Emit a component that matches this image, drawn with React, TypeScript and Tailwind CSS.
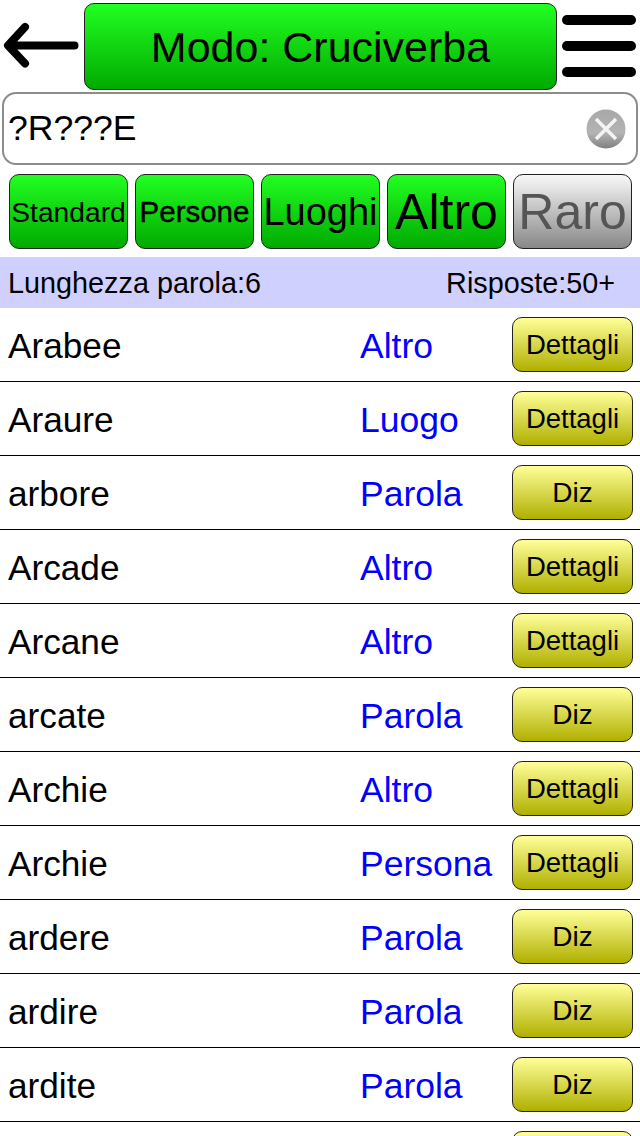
// App.tsx
const FONT = "font-['Liberation_Sans',Arial,sans-serif]";

const GREEN = "bg-linear-to-b/srgb from-[#22ff22] to-[#00aa00] border border-[#222] rounded-[10px]";
const YELLOW = "bg-linear-to-b/srgb from-[#ffff99] to-[#b0b000] border border-[#222] rounded-[10px]";

const FILTERS = [
  { label: "Standard", size: "text-[28.2px]" },
  { label: "Persone", size: "text-[29.5px] [-webkit-text-stroke:0.4px_#000]" },
  { label: "Luoghi", size: "text-[38px]" },
  { label: "Altro", size: "text-[50px]" },
];

const ROWS = [
  { word: "Arabee", kind: "Altro", action: "Dettagli" },
  { word: "Araure", kind: "Luogo", action: "Dettagli" },
  { word: "arbore", kind: "Parola", action: "Diz" },
  { word: "Arcade", kind: "Altro", action: "Dettagli" },
  { word: "Arcane", kind: "Altro", action: "Dettagli" },
  { word: "arcate", kind: "Parola", action: "Diz" },
  { word: "Archie", kind: "Altro", action: "Dettagli" },
  { word: "Archie", kind: "Persona", action: "Dettagli" },
  { word: "ardere", kind: "Parola", action: "Diz" },
  { word: "ardire", kind: "Parola", action: "Diz" },
  { word: "ardite", kind: "Parola", action: "Diz" },
];

function BackArrow() {
  return (
    <svg width="84" height="90" viewBox="0 0 84 90" className="shrink-0">
      <path
        d="M74.5 45.5H9M25 27L8 45.5L25 63.5"
        fill="none"
        stroke="#000"
        strokeWidth="8"
        strokeLinecap="round"
        strokeLinejoin="round"
      />
    </svg>
  );
}

function MenuIcon() {
  return (
    <div className="flex w-[83px] shrink-0 flex-col gap-[16px] pl-[5px] pr-[4px] pt-[12px]">
      <span className="block h-[10px] rounded-full bg-black" />
      <span className="block h-[10px] rounded-full bg-black" />
      <span className="block h-[10px] rounded-full bg-black" />
    </div>
  );
}

function ClearIcon() {
  return (
    <svg width="40" height="40" viewBox="0 0 40 40" className="shrink-0">
      <defs>
        <linearGradient id="clearFill" x1="0" y1="0" x2="0" y2="1">
          <stop offset="0" stopColor="#a8a8a8" />
          <stop offset="0.6" stopColor="#b4b4b4" />
          <stop offset="1" stopColor="#808080" />
        </linearGradient>
      </defs>
      <circle cx="20" cy="20" r="19.5" fill="url(#clearFill)" />
      <path d="M10 10L30 30M30 10L10 30" stroke="#f4f4f4" strokeWidth="3.5" />
    </svg>
  );
}

export default function App() {
  return (
    <div className={`${FONT} h-[1136px] w-[640px] overflow-hidden bg-white text-black`}>
      {/* Testata */}
      <div className="flex h-[92px] pt-[3px]">
        <div className="-mt-[3px]">
          <BackArrow />
        </div>
        <div className={`${GREEN} flex h-[87px] w-[473px] shrink-0 items-center justify-center pt-[1px] text-[43px]`}>
          Modo: Cruciverba
        </div>
        <MenuIcon />
      </div>

      {/* Ricerca */}
      <div className="mx-[2px] flex h-[73px] items-center justify-between rounded-[14px] border-2 border-[#8c8c8c] pl-[4px] pr-[10px]">
        <span className="pt-[1px] text-[35.6px]">?R???E</span>
        <ClearIcon />
      </div>

      {/* Filtri */}
      <div className="flex gap-[7px] px-[9px] pt-[9px]">
        {FILTERS.map((f) => (
          <div
            key={f.label}
            className={`${GREEN} ${f.size} flex h-[75px] w-[119px] shrink-0 items-center justify-center whitespace-nowrap pt-[2px]`}
          >
            {f.label}
          </div>
        ))}
        <div className="flex h-[75px] w-[119px] shrink-0 items-center justify-center rounded-[10px] border border-[#222] bg-linear-to-b/srgb from-[#f8f8f8] to-[#888888] pt-[2px] text-[50px] text-[#555]">
          Raro
        </div>
      </div>

      {/* Info */}
      <div className="mt-[8px] flex h-[51px] items-center justify-between bg-[#d0d0ff] pl-[8px] pr-[25px] pt-[2px] text-[28.8px]">
        <span>Lunghezza parola:6</span>
        <span>Risposte:50+</span>
      </div>

      {/* Lista */}
      <div>
        {ROWS.map((r, i) => (
          <div key={i} className="flex h-[74px] items-center border-b border-black pl-[8px] pr-[7px]">
            <span className="w-[352px] pt-[4px] text-[35.2px]">{r.word}</span>
            <span className="flex-1 pt-[4px] text-[35.5px] text-[#0000ff]">{r.kind}</span>
            <div
              className={`${YELLOW} flex h-[55px] w-[121px] items-center justify-center ${
                r.action === "Diz" ? "text-[28px]" : "text-[27.5px]"
              }`}
            >
              {r.action}
            </div>
          </div>
        ))}
        {/* Riga tagliata dal bordo dello schermo */}
        <div className="flex justify-end pr-[7px] pt-[9px]">
          <div className={`${YELLOW} h-[55px] w-[121px]`} />
        </div>
      </div>
    </div>
  );
}
